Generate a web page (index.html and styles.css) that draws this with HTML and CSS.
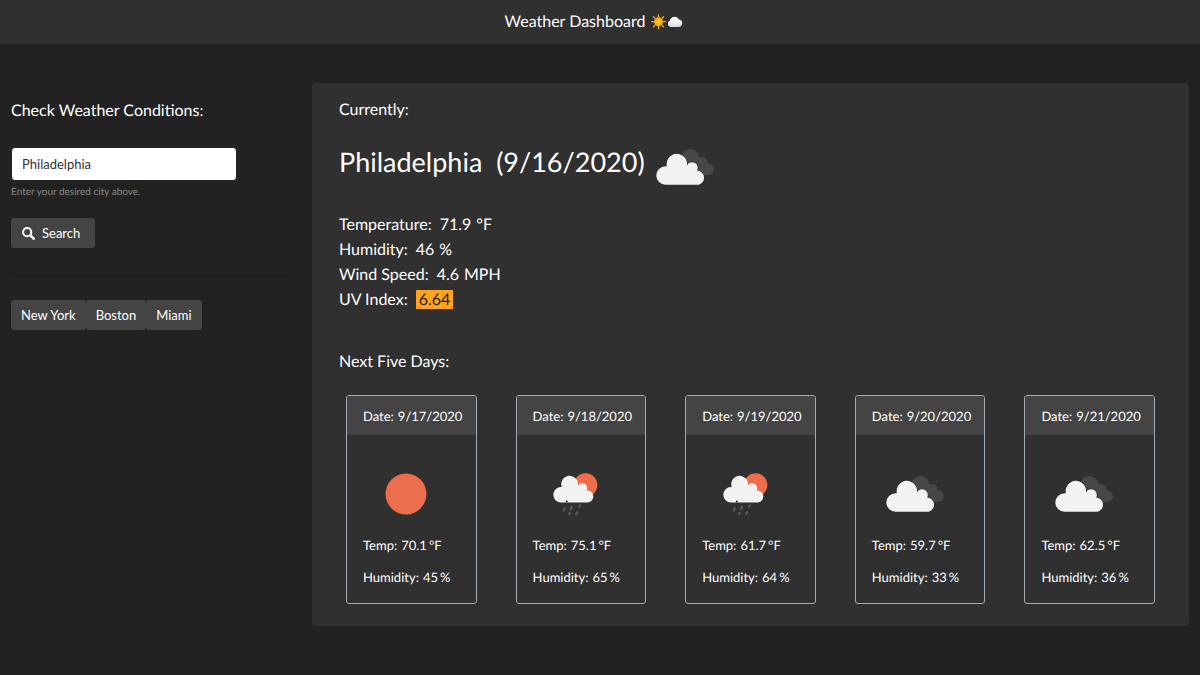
FILE: index.html
```
<!DOCTYPE html>
<html lang="en">
<head>
<meta charset="utf-8">
<meta name="viewport" content="width=device-width, initial-scale=1">
<title>Weather Dashboard</title>
<link rel="stylesheet" href="styles.css">
</head>
<body>
<svg class="defs" aria-hidden="true">
  <defs>
    <symbol id="clouds" viewBox="497 56 174 109">
      <g fill="#48484a"><circle cx="600" cy="83" r="27"/><circle cx="635" cy="97" r="17"/><circle cx="653" cy="117" r="18"/><path d="M580 80h55l18 55h-50z"/></g>
      <path d="M525 164A28 28 0 0 1 525 108L529 108A31 31 0 1 1 590 106A17 17 0 0 1 621 121A22 22 0 0 1 626 164Z" fill="#f2f2f2" stroke="#2a2a2a" stroke-width="4" paint-order="stroke"/>
    </symbol>
    <symbol id="rain" viewBox="159 262 134 128">
      <circle cx="256" cy="298" r="35" fill="#ec6e4c"/>
      <path d="M183 350A23 23 0 0 1 183 304L185 304A25 25 0 1 1 233 300A14 14 0 0 1 259 314A18 18 0 0 1 263 350Z" fill="#f2f2f2"/>
      <circle cx="200" cy="347" r="3" fill="#222"/>
      <path d="M194 367l-3 6M215 363l-3 6M239 359l-2 3M209 381l-2 3M231 379l-3 6" stroke="#58585a" stroke-width="7" stroke-linecap="round"/>
    </symbol>
    <symbol id="sun" viewBox="0 0 42 42"><circle cx="21" cy="21" r="20.5" fill="#ec6e4c"/></symbol>
    <radialGradient id="glow"><stop offset="0" stop-color="#ffd02a"/><stop offset="1" stop-color="#f99e12"/></radialGradient>
    <linearGradient id="mist" x2="0" y2="1"><stop offset=".3" stop-color="#fff"/><stop offset="1" stop-color="#cfdce8"/></linearGradient>
  </defs>
</svg>

<header class="topbar">
  <h1 class="topbar-title">Weather Dashboard</h1>
  <svg class="topbar-icons" viewBox="0 0 32 16" aria-hidden="true">
    <path d="M7.500 .8v2.200M7.500 12.500v2.200M.500 7.700h2.200M12.300 7.700h2.200M2.500 2.700l1.500 1.500M11 11.200l1.500 1.500M12.500 2.700L11 4.200M4 11.200l-1.500 1.500" stroke="#f5a91c" stroke-width="1.300" stroke-linecap="round"/>
    <circle cx="7.500" cy="7.700" r="4.500" fill="url(#glow)"/>
    <path d="M19.500 13A3.500 3.500 0 0 1 18.800 6.500A5 5 0 0 1 28 5.500A3.800 3.800 0 0 1 28 13Z" fill="url(#mist)"/>
  </svg>
</header>

<div class="page">
  <aside class="sidebar">
    <form class="search">
      <label class="heading" for="city">Check Weather Conditions:</label>
      <input class="city-input" id="city" type="text" value="Philadelphia" aria-describedby="city-help">
      <small class="help" id="city-help">Enter your desired city above.</small>
      <button class="btn btn-search" type="button">
        <svg class="btn-icon" viewBox="0 0 13 13" aria-hidden="true"><circle cx="5.200" cy="5.200" r="4.100" fill="none" stroke="#fff" stroke-width="2"/><path d="M8.400 8.400l3.300 3.300" stroke="#fff" stroke-width="2.600" stroke-linecap="round"/></svg>
        Search
      </button>
    </form>
    <nav class="history" aria-label="Recent cities">
      <button class="btn" type="button">New York</button>
      <button class="btn" type="button">Boston</button>
      <button class="btn" type="button">Miami</button>
    </nav>
  </aside>

  <main class="panel">
    <h2 class="heading">Currently:</h2>
    <div class="current">
      <h3 class="current-city">Philadelphia&nbsp; (9/16/2020)</h3>
      <svg class="icon-clouds" role="img" aria-label="Cloudy"><use href="#clouds"/></svg>
    </div>
    <ul class="metrics">
      <li><span>Temperature:</span> <span>71.9</span> <span>°F</span></li>
      <li><span>Humidity:</span> <span>46</span> <span>%</span></li>
      <li><span>Wind Speed:</span> <span>4.6</span> <span>MPH</span></li>
      <li><span>UV Index:</span> <span class="uv">6.64</span></li>
    </ul>
    <h2 class="heading">Next Five Days:</h2>
    <div class="forecast">
      <article class="card">
        <h4 class="card-date"><span>Date:</span> <span>9/17/2020</span></h4>
        <div class="card-body">
          <div class="card-icon"><svg class="icon-sun" role="img" aria-label="Clear"><use href="#sun"/></svg></div>
          <p class="reading"><span>Temp:</span> <span>70.1</span> <span>°F</span></p>
          <p class="reading"><span>Humidity:</span> <span>45</span> <span>%</span></p>
        </div>
      </article>
      <article class="card">
        <h4 class="card-date"><span>Date:</span> <span>9/18/2020</span></h4>
        <div class="card-body">
          <div class="card-icon"><svg class="icon-rain" role="img" aria-label="Rain"><use href="#rain"/></svg></div>
          <p class="reading"><span>Temp:</span> <span>75.1</span> <span>°F</span></p>
          <p class="reading"><span>Humidity:</span> <span>65</span> <span>%</span></p>
        </div>
      </article>
      <article class="card">
        <h4 class="card-date"><span>Date:</span> <span>9/19/2020</span></h4>
        <div class="card-body">
          <div class="card-icon"><svg class="icon-rain" role="img" aria-label="Rain"><use href="#rain"/></svg></div>
          <p class="reading"><span>Temp:</span> <span>61.7</span> <span>°F</span></p>
          <p class="reading"><span>Humidity:</span> <span>64</span> <span>%</span></p>
        </div>
      </article>
      <article class="card">
        <h4 class="card-date"><span>Date:</span> <span>9/20/2020</span></h4>
        <div class="card-body">
          <div class="card-icon"><svg class="icon-clouds" role="img" aria-label="Cloudy"><use href="#clouds"/></svg></div>
          <p class="reading"><span>Temp:</span> <span>59.7</span> <span>°F</span></p>
          <p class="reading"><span>Humidity:</span> <span>33</span> <span>%</span></p>
        </div>
      </article>
      <article class="card">
        <h4 class="card-date"><span>Date:</span> <span>9/21/2020</span></h4>
        <div class="card-body">
          <div class="card-icon"><svg class="icon-clouds" role="img" aria-label="Cloudy"><use href="#clouds"/></svg></div>
          <p class="reading"><span>Temp:</span> <span>62.5</span> <span>°F</span></p>
          <p class="reading"><span>Humidity:</span> <span>36</span> <span>%</span></p>
        </div>
      </article>
    </div>
  </main>
</div>
</body>
</html>
```
FILE: styles.css
```
* { box-sizing: border-box; }
body {
  margin: 0;
  background: #222;
  color: #fff;
  font: 13px/20px Lato, sans-serif;
  text-rendering: geometricPrecision;
}
h1, h2, h3, h4, p, ul { margin: 0; padding: 0; font-weight: 400; }
svg { display: block; }
.defs { position: absolute; width: 0; height: 0; }

.topbar {
  display: flex;
  justify-content: center;
  align-items: center;
  gap: 6px;
  padding: 10px 12px 10px 0;
  background: #303030;
}
.topbar-title { font-size: 16px; line-height: 24px; }
.topbar-icons { width: 32px; height: 16px; }

.page {
  display: grid;
  grid-template-columns: 277px 1fr;
  gap: 24px;
  align-items: start;
  padding: 39px 11px;
}
.heading { font-size: 16px; line-height: 24px; }

.sidebar { padding-top: 16px; }
.search {
  display: flex;
  flex-direction: column;
  align-items: flex-start;
  padding-bottom: 31px;
  border-bottom: 1px solid #262626;
}
.search .heading {
  align-self: stretch;
  padding-bottom: 9px;
  margin-bottom: 14px;
  border-bottom: 1px solid #262626;
}
.city-input {
  width: 226px;
  height: 34px;
  padding: 0 10px;
  border: 1px solid #222;
  border-radius: 4px;
  background: #fff;
  color: #333;
  font: inherit;
}
.help { margin-top: 3px; font-size: 10px; line-height: 16px; color: #888; }
.btn {
  display: inline-flex;
  align-items: center;
  gap: 7px;
  height: 30px;
  padding: 0 10px;
  border: 0;
  border-radius: 3px;
  background: #444;
  color: #fff;
  font: inherit;
}
.btn-search { margin-top: 18px; padding: 0 15px 0 11px; }
.btn-icon { width: 13px; height: 13px; }
.history { display: flex; padding-top: 20px; }

.panel {
  padding: 15px 27px 22px;
  border-radius: 4px;
  background: #303030;
}
.current { display: flex; align-items: flex-start; gap: 11px; margin-top: 20px; }
.current .icon-clouds { margin-top: 7px; }
.current-city { font-size: 27px; line-height: 40px; }
.icon-clouds { width: 58px; height: 36px; }
.icon-rain { width: 45px; height: 43px; }
.icon-sun { width: 42px; height: 42px; }
.metrics {
  margin: 27px 0 38px;
  list-style: none;
  font-size: 16px;
  line-height: 25px;
}
.metrics li { display: flex; align-items: center; gap: 5px; }
.metrics li span:first-child { margin-right: 3px; }
.uv { padding: 0 3px; line-height: 19px; background: #ffa41c; color: #222; }

.forecast {
  display: grid;
  grid-template-columns: repeat(5, 1fr);
  gap: 39px;
  padding: 0 7px;
  margin-top: 21px;
}
.card {
  overflow: hidden;
  border: 1px solid #a3acb4;
  border-radius: 3px;
}
.card-date {
  display: flex;
  gap: 4px;
  padding: 10px 16px 9px;
  background: #444;
  font-size: 13px;
  line-height: 20px;
}
.card-body { display: grid; gap: 12px; padding: 16px; }
.card-icon {
  display: grid;
  place-items: center;
  width: 86px;
  height: 86px;
  margin-bottom: -14px;
}
.reading { display: flex; gap: 2px; white-space: nowrap; }
.reading span:first-child { margin-right: 2px; }
```
